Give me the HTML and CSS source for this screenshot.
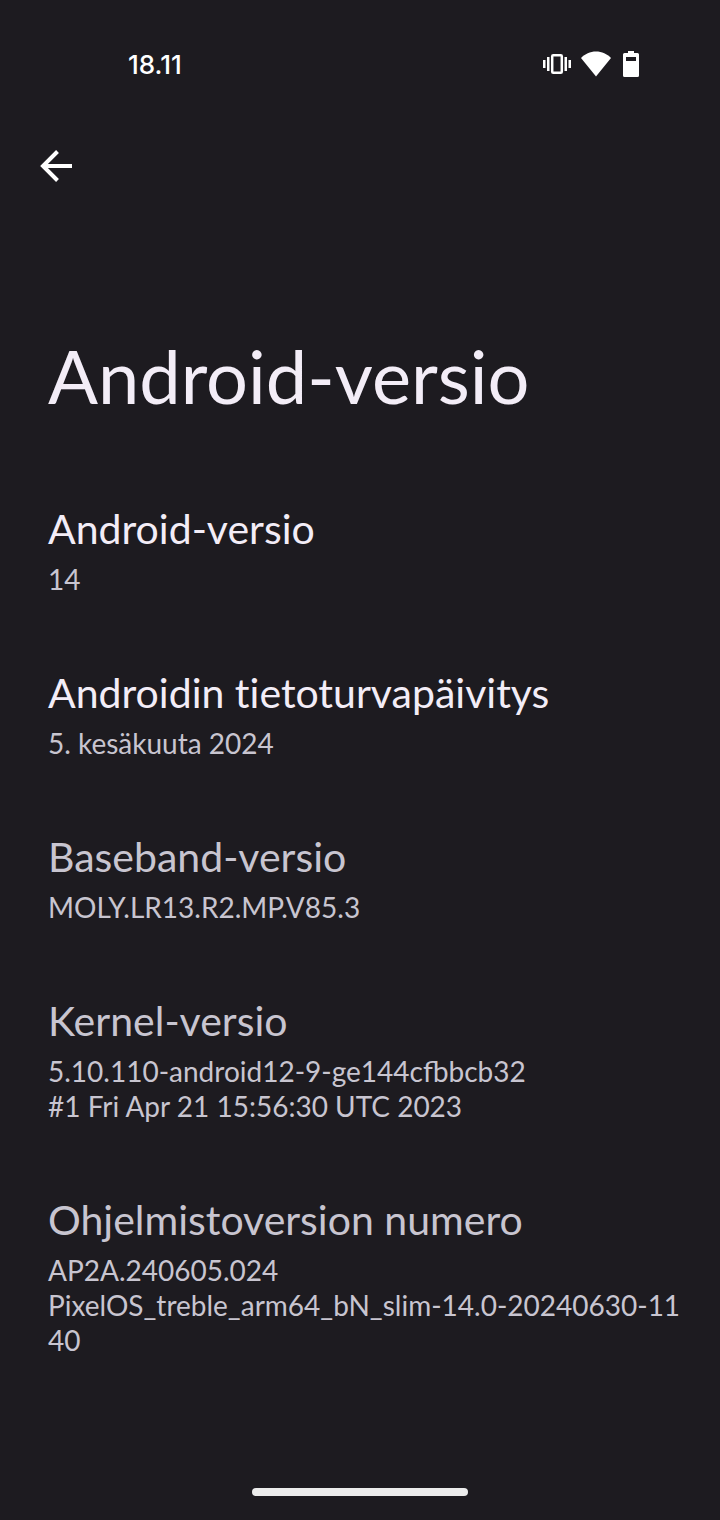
FILE: index.html
```
<!DOCTYPE html>
<html lang="fi">
<head>
    <meta charset="utf-8">
    <meta name="viewport" content="width=device-width, initial-scale=1">
    <title>Android-versio</title>
    <link rel="stylesheet" href="styles.css">
</head>

<body>
    <!-- STATUS BAR -->
    <div class="status-bar">
        <span class="clock">18.11</span>
        <div class="status-icons">
            <svg width="28" height="22" viewBox="0 0 28 22">
                <path fill="#fff" d="M0 7h2.500v8H0zM4 4h2.500v14H4zM21.500 4H24v14h-2.500zM25.500 7H28v8h-2.500z"/>
                <rect x="9.200" y="2.200" width="9.600" height="17.600" rx="1" fill="none" stroke="#fff" stroke-width="2.500"/>
            </svg>
            <svg width="32" height="26" viewBox="0 0 32 26">
                <path fill="#fff" d="M15 25.500L0 7C4 3 9 .5 15 .5S26 3 30 7z"/>
            </svg>
            <svg width="16" height="26" viewBox="0 0 16 26">
                <path fill="#fff" fill-rule="evenodd" d="M5 0h6v2h3.500a1.500 1.500 0 0 1 1.500 1.500v21a1.500 1.500 0 0 1-1.500 1.500h-13A1.500 1.500 0 0 1 0 24.500v-21A1.500 1.500 0 0 1 1.500 2H5zM3 6v4h10V6z"/>
            </svg>
        </div>
    </div>

    <!-- TOOLBAR -->
    <header class="toolbar">
        <button type="button" class="back" aria-label="Takaisin">
            <svg width="32" height="32" viewBox="0 0 32 32" fill="none" stroke="#fff" stroke-width="4">
                <path d="M32 16H4M17.500 1.500L3 16l14.500 14.500"/>
            </svg>
        </button>
    </header>

    <main>
        <h1>Android-versio</h1>

        <ul class="prefs">
            <li>
                <h2>Android-versio</h2>
                <p>14</p>
            </li>
            <li>
                <h2>Androidin tietoturvapäivitys</h2>
                <p>5. kesäkuuta 2024</p>
            </li>
            <li class="disabled">
                <h2>Baseband-versio</h2>
                <p>MOLY.LR13.R2.MP.V85.3</p>
            </li>
            <li class="disabled">
                <h2>Kernel-versio</h2>
                <p>5.10.110-android12-9-ge144cfbbcb32<br>#1 Fri Apr 21 15:56:30 UTC 2023</p>
            </li>
            <li class="disabled">
                <h2>Ohjelmistoversion numero</h2>
                <p>AP2A.240605.024<br>PixelOS_treble_arm64_bN_slim-14.0-20240630-11<br>40</p>
            </li>
        </ul>
    </main>

    <!-- GESTURE BAR -->
    <div class="gesture-bar"></div>
</body>
</html>
```

FILE: styles.css
```
* { box-sizing: border-box; }

body {
    display: flex;
    flex-direction: column;
    min-height: 100vh;
    margin: 0;
    background: #1d1b20;
    color: #f3edf7;
    font-family: Lato, "Open Sans", sans-serif;
}

h1, h2, p, ul {
    margin: 0;
    padding: 0;
    font-weight: 400;
}

/*** status bar ***/
.status-bar {
    display: flex;
    align-items: center;
    justify-content: space-between;
    height: 128px;
    padding: 0 81px 0 128px;
    color: #fff;
}
.clock {
    font-family: Inter, sans-serif;
    font-size: 26px;
    font-weight: 500;
}
.status-icons {
    display: flex;
    align-items: center;
    gap: 10px;
}

/*** toolbar with back arrow ***/
.toolbar { padding: 0 24px; }
.back {
    display: block;
    padding: 22px 16px;
    border: 0;
    background: none;
}
.back svg { display: block; }

/*** page content ***/
main {
    flex: 1;
    padding: 0 24px 0 48px;
}
h1 {
    margin: 127px 0 83px;
    font-size: 74px;
    line-height: 90px;
}
.prefs {
    display: flex;
    flex-direction: column;
    gap: 71px;
    list-style: none;
}
h2 {
    margin-bottom: 8px;
    font-size: 41px;
    line-height: 50px;
    font-variant-ligatures: none;
}
.prefs p {
    color: #c8c5d0;
    font-size: 28px;
    line-height: 35px;
}
.disabled h2 { color: #c8c5d0; }

/*** gesture handle ***/
.gesture-bar {
    width: 30%;
    height: 8px;
    margin: 24px auto;
    border-radius: 4px;
    background: #ececec;
}
```
